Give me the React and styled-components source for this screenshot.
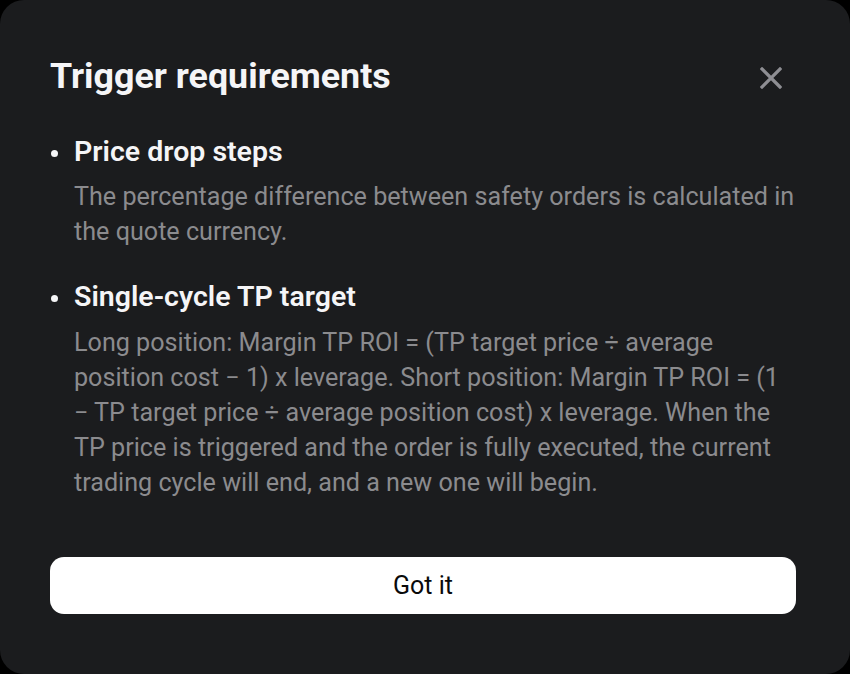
import React from "react";
import styled, { createGlobalStyle } from "styled-components";

const GlobalStyle = createGlobalStyle`
  html, body {
    margin: 0;
    padding: 0;
    background: #000000;
  }
  * {
    box-sizing: border-box;
  }
`;

const Modal = styled.div`
  width: 850px;
  height: 674px;
  background: #1b1c1e;
  border-radius: 24px;
  padding: 56px 54px 0 50px;
  font-family: Roboto, "Noto Sans", sans-serif;
  display: flex;
  flex-direction: column;
`;

const Header = styled.div`
  display: flex;
  align-items: center;
  justify-content: space-between;
  height: 40px;
`;

const Title = styled.h1`
  margin: 0;
  font-size: 35.8px;
  line-height: 40px;
  font-weight: 700;
  color: #f5f5f7;
`;

const CloseButton = styled.button`
  background: none;
  border: none;
  padding: 0;
  margin: 4px 13px 0 0;
  width: 24px;
  height: 24px;
  display: flex;
  align-items: center;
  justify-content: center;
  color: #8e8e93;
  cursor: pointer;
`;

const List = styled.ul`
  list-style: none;
  margin: 39px 0 0;
  padding: 0;
  display: flex;
  flex-direction: column;
  gap: 31px;
`;

const Item = styled.li`
  display: flex;
  flex-direction: column;
  gap: ${({ $gap }) => $gap}px;
`;

const ItemHead = styled.div`
  display: flex;
  align-items: center;
`;

const Dot = styled.span`
  width: 7px;
  height: 7px;
  border-radius: 50%;
  background: #f5f5f7;
  margin: 2px 16px 0 1px;
`;

const ItemTitle = styled.h2`
  margin: 0;
  font-size: 28.5px;
  line-height: 34px;
  font-weight: 600;
  color: #f5f5f7;
`;

const ItemText = styled.p`
  margin: 0;
  padding-left: 24px;
  font-size: 25.15px;
  line-height: 35px;
  color: #8b8b8e;
`;

const Confirm = styled.button`
  margin-top: 57px;
  height: 57px;
  width: 100%;
  border: none;
  border-radius: 14px;
  background: #ffffff;
  color: #0a0a0a;
  font-family: Roboto, "Noto Sans", sans-serif;
  font-size: 25px;
  cursor: pointer;
`;

const items = [
  {
    title: "Price drop steps",
    text: "The percentage difference between safety orders is calculated in the quote currency.",
    gap: 10,
  },
  {
    title: "Single-cycle TP target",
    text: "Long position: Margin TP ROI = (TP target price ÷ average position cost − 1) x leverage. Short position: Margin TP ROI = (1 − TP target price ÷ average position cost) x leverage. When the TP price is triggered and the order is fully executed, the current trading cycle will end, and a new one will begin.",
    gap: 11,
  },
];

export default function App() {
  return (
    <>
      <GlobalStyle />
      <Modal>
        <Header>
          <Title>Trigger requirements</Title>
          <CloseButton aria-label="Close">
            <svg width="22" height="22" viewBox="0 0 22 22">
              <path
                d="M2 2 L20 20 M20 2 L2 20"
                stroke="currentColor"
                strokeWidth="3.2"
                strokeLinecap="square"
              />
            </svg>
          </CloseButton>
        </Header>
        <List>
          {items.map((item) => (
            <Item key={item.title} $gap={item.gap}>
              <ItemHead>
                <Dot />
                <ItemTitle>{item.title}</ItemTitle>
              </ItemHead>
              <ItemText>{item.text}</ItemText>
            </Item>
          ))}
        </List>
        <Confirm>Got it</Confirm>
      </Modal>
    </>
  );
}
